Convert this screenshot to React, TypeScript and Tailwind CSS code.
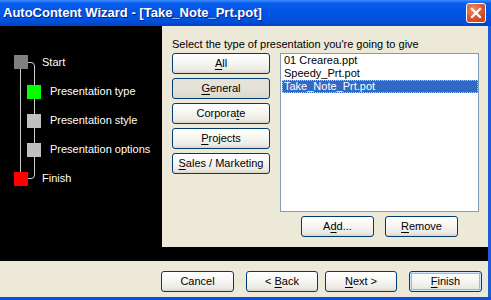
import React from 'react'

const font = "font-['Liberation_Sans',Arial,sans-serif]"

function XPButton({
  children,
  className = '',
  pressed = false,
  isDefault = false,
}: {
  children: React.ReactNode
  className?: string
  pressed?: boolean
  isDefault?: boolean
}) {
  const bg = pressed
    ? 'bg-[linear-gradient(to_bottom,#e6e3da,#e3e0d6_60%,#dcd8cc)]'
    : 'bg-[linear-gradient(to_bottom,#ffffff,#f7f6f2_45%,#ebe9e2_85%,#d8d4c8)]'
  const ring = isDefault ? 'shadow-[inset_0_0_0_1px_#cee7ff,inset_0_0_0_2px_#98b8ea]' : ''
  return (
    <div
      className={`flex h-[21px] items-center justify-center rounded-[3px] border border-[#003c74] text-[11px] leading-none text-black ${bg} ${ring} ${className}`}
    >
      <span className="whitespace-pre">{children}</span>
    </div>
  )
}

const U = ({ children }: { children: React.ReactNode }) => (
  <span className="underline underline-offset-[2px]">{children}</span>
)

function Tree() {
  return (
    <svg width="42" height="221" className="shrink-0">
      <line x1="20.5" y1="43" x2="20.5" y2="146" stroke="#c8c8c8" />
      <path d="M28 36.5 H31 Q34.5 36.5 34.5 40 V149 Q34.5 152.5 31 152.5 H28" fill="none" stroke="#d0d0d0" />
      <rect x="14" y="29" width="14" height="14" fill="#808080" />
      <rect x="27" y="59" width="14" height="14" fill="#00ff00" />
      <rect x="27" y="88" width="14" height="14" fill="#c0c0c0" />
      <rect x="27" y="117" width="14" height="14" fill="#c0c0c0" />
      <rect x="14" y="146" width="14" height="14" fill="#ff0000" />
    </svg>
  )
}

export default function App() {
  const steps = [
    { label: 'Start', indent: false },
    { label: 'Presentation type', indent: true },
    { label: 'Presentation style', indent: true },
    { label: 'Presentation options', indent: true },
    { label: 'Finish', indent: false },
  ]
  const files = ['01 Crearea.ppt', 'Speedy_Prt.pot', 'Take_Note_Prt.pot']

  return (
    <div className={`flex h-[300px] w-[491px] flex-col overflow-hidden bg-[#0a4de0] ${font}`}>
      {/* title bar */}
      <div className="flex h-[26px] shrink-0 items-center justify-between bg-[linear-gradient(to_bottom,#3d8dff_0%,#0a5cec_12%,#0055e5_45%,#0050dc_80%,#0042c4_100%)] pl-[3px] pr-[5px]">
        <span className="text-[13px] font-bold text-white [text-shadow:1px_1px_#0a1e88]">
          AutoContent Wizard - [Take_Note_Prt.pot]
        </span>
        <div className="flex h-[20px] w-[20px] items-center justify-center rounded-[3px] border border-white bg-[radial-gradient(circle_at_35%_30%,#f08a6a,#d9532e_55%,#bf3a16)]">
          <svg width="12" height="12" viewBox="0 0 12 12">
            <path d="M2 2 L10 10 M10 2 L2 10" stroke="white" strokeWidth="2.2" strokeLinecap="square" />
          </svg>
        </div>
      </div>

      <div className="flex flex-1 flex-col border-r-[3px] border-[#1e5bd8]">
        {/* main area */}
        <div className="flex h-[221px] shrink-0">
          <div className="flex w-[162px] shrink-0 bg-black">
            <Tree />
            <div className="flex flex-col pt-[22px]">
              {steps.map((s) => (
                <div
                  key={s.label}
                  className={`flex h-[29px] items-center whitespace-nowrap text-[11px] text-white ${s.indent ? 'pl-[8px]' : ''}`}
                >
                  {s.label}
                </div>
              ))}
            </div>
          </div>

          <div className="flex flex-1 flex-col bg-[#ece9d8] pl-[10px] pt-[12px]">
            <div className="h-[13px] whitespace-nowrap text-[11px] leading-[13px] text-black">
              Select the type of presentation you're going to give
            </div>
            <div className="mt-[2px] flex gap-[10px]">
              <div className="flex w-[98px] flex-col gap-[4px]">
                <XPButton>
                  <U>A</U>ll
                </XPButton>
                <XPButton pressed>
                  <U>G</U>eneral
                </XPButton>
                <XPButton>
                  Corpora<U>t</U>e
                </XPButton>
                <XPButton>
                  <U>P</U>rojects
                </XPButton>
                <XPButton>
                  <U>S</U>ales / Marketing
                </XPButton>
              </div>
              <div className="flex w-[199px] flex-col">
                <div className="h-[159px] border border-[#7f9db9] bg-white pl-[1px] pt-0">
                  {files.map((f, i) => (
                    <div
                      key={f}
                      className={`h-[13px] whitespace-nowrap pl-[2px] text-[11px] leading-[13px] ${
                        i === 2
                          ? 'bg-[#316ac5] text-white outline outline-1 -outline-offset-1 outline-dotted outline-[#b9c9ea]'
                          : 'text-black'
                      }`}
                    >
                      {f}
                    </div>
                  ))}
                </div>
                <div className="mt-[4px] flex justify-center gap-[11px]">
                  <XPButton className="w-[73px]">
                    A<U>d</U>d...
                  </XPButton>
                  <XPButton className="w-[73px]">
                    <U>R</U>emove
                  </XPButton>
                </div>
              </div>
            </div>
          </div>
        </div>

        {/* separator band */}
        <div className="h-[14px] shrink-0 bg-black" />

        {/* bottom buttons */}
        <div className="flex flex-1 items-start bg-[#ece9d8] pl-[161px] pt-[10px]">
          <XPButton className="w-[73px]">Cancel</XPButton>
          <XPButton className="ml-[12px] w-[72px]">
            {'< '}
            <U>B</U>ack
          </XPButton>
          <XPButton className="ml-[7px] w-[72px]">
            <U>N</U>
            {'ext >'}
          </XPButton>
          <XPButton isDefault className="ml-[12px] w-[73px]">
            <U>F</U>inish
          </XPButton>
        </div>
      </div>
      <div className="h-[3px] shrink-0 bg-[#0a4de0]" />
    </div>
  )
}
